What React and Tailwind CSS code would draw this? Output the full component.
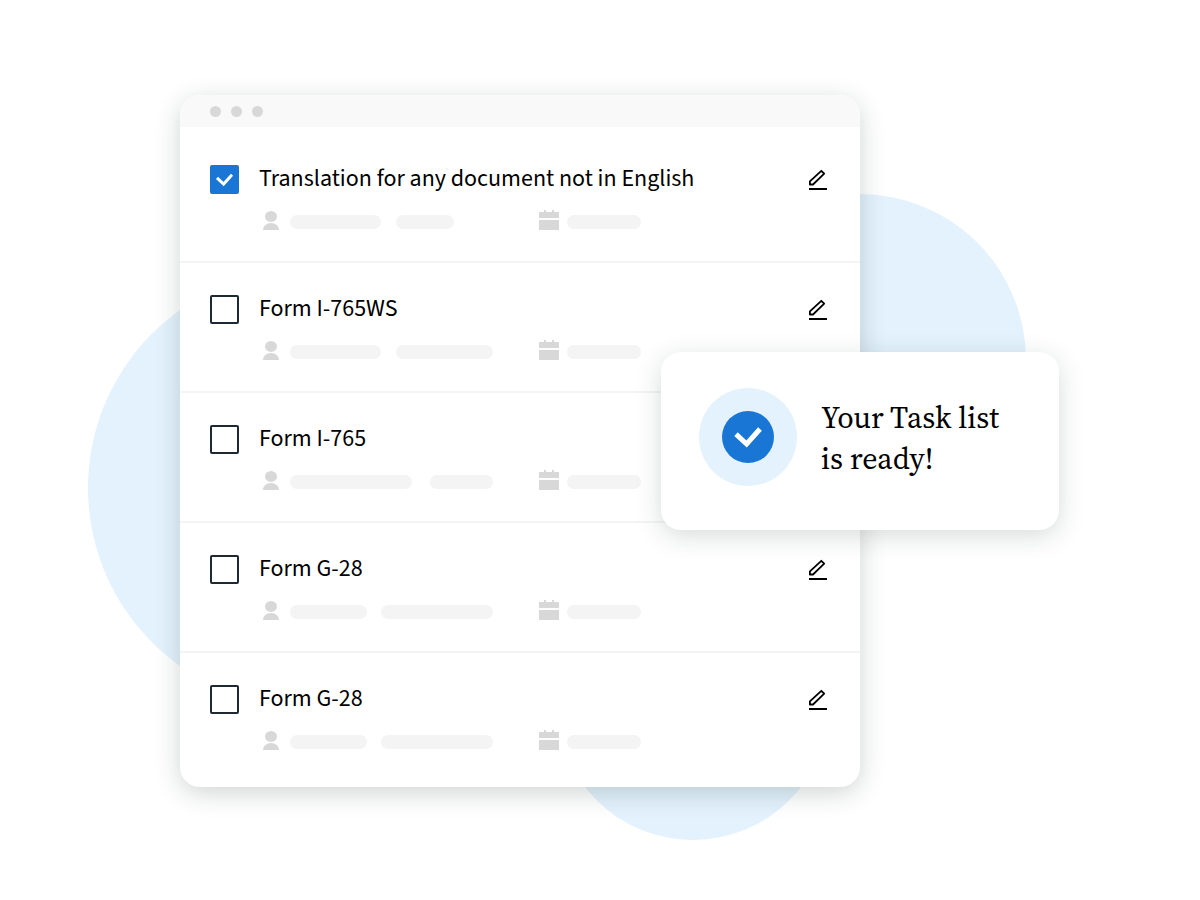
import { useState } from "react";

const initialTasks = [
  { id: 1, title: "Translation for any document not in English", done: true, bars: ["w-[91px]", "ml-[15px] w-[58px]"] },
  { id: 2, title: "Form I-765WS", done: false, bars: ["w-[91px]", "ml-[15px] w-[97px]"] },
  { id: 3, title: "Form I-765", done: false, bars: ["w-[122px]", "ml-[18px] w-[63px]"] },
  { id: 4, title: "Form G-28", done: false, bars: ["w-[77px]", "ml-[14px] w-[112px]"] },
  { id: 5, title: "Form G-28", done: false, bars: ["w-[77px]", "ml-[14px] w-[112px]"] },
];

function PersonIcon() {
  return (
    <svg className="h-5 w-4 shrink-0 fill-[#d8d8d8]" viewBox="0 0 16 20" aria-hidden="true">
      <ellipse cx="8" cy="6.4" rx="6" ry="5.5" />
      <path d="M0 20c0-4 3.5-7 8-7s8 3 8 7z" />
    </svg>
  );
}

function CalendarIcon() {
  return (
    <svg className="h-5 w-5 shrink-0 fill-[#d8d8d8]" viewBox="0 0 20 20" aria-hidden="true">
      <path d="M5 0h2v2h6V0h2v2h5v6H0V2h5zM0 10h20v10H0z" />
    </svg>
  );
}

function PencilIcon() {
  return (
    <svg className="h-[23px] w-5" viewBox="0 0 20 23" fill="none" stroke="#000" aria-hidden="true">
      <path d="M1.9 16.5v-3.1L13.3 2.8l2.9 2.8L5 16.5z" strokeWidth="1.8" strokeLinejoin="round" />
      <path d="M1 21h18" strokeWidth="2" />
    </svg>
  );
}

function Placeholder({ className }) {
  return <span className={`h-3.5 rounded-full bg-[#f4f4f4] ${className}`} />;
}

function TaskRow({ task, onToggle }) {
  const inputId = `task-${task.id}`;

  return (
    <li className="border-b-2 border-[#f4f4f4] px-[30px] pt-8 pb-[31px] last:border-b-0 last:pb-[37px]">
      <div className="flex h-[29px] items-center">
        <span className="relative flex shrink-0">
          <input
            id={inputId}
            type="checkbox"
            checked={task.done}
            onChange={() => onToggle(task.id)}
            className="size-[29px] appearance-none rounded-[2px] border-2 border-[#1f2933] bg-white checked:border-[#1976d4] checked:bg-[#1976d4]"
          />
          {task.done && (
            <svg className="pointer-events-none absolute inset-0 size-[29px]" viewBox="0 0 29 29" fill="none" aria-hidden="true">
              <path d="M7 12.8l6.6 6.2 8.4-9.2" stroke="#fff" strokeWidth="3" />
            </svg>
          )}
        </span>
        <label htmlFor={inputId} className="ml-5 flex-1 pb-0.5 text-2xl leading-7">
          {task.title}
        </label>
        <button type="button" aria-label={`Edit ${task.title}`} className="mr-0.5 shrink-0">
          <PencilIcon />
        </button>
      </div>

      <div className="mt-4 ml-[53px] flex h-5 items-center">
        <div className="flex w-[276px] items-center">
          <PersonIcon />
          <div className="ml-[11px] flex pt-1">
            {task.bars.map((bar) => (
              <Placeholder key={bar} className={bar} />
            ))}
          </div>
        </div>
        <CalendarIcon />
        <div className="ml-2 flex pt-1">
          <Placeholder className="w-[74px]" />
        </div>
      </div>
    </li>
  );
}

function ReadyCard() {
  return (
    <div className="absolute top-[257px] -right-[199px] flex items-center gap-6 rounded-[20px] bg-white pt-9 pr-[60px] pb-11 pl-[38px] shadow-[0_6px_26px_rgba(25,45,40,0.17)]">
      <span className="flex size-[98px] shrink-0 items-center justify-center rounded-full bg-[#e3f2fd]">
        <span className="flex size-[52px] items-center justify-center rounded-full bg-[#1976d4]">
          <svg className="size-[52px]" viewBox="0 0 52 52" fill="none" aria-hidden="true">
            <path d="M14 23.2l10.6 9.8L38 18" stroke="#fff" strokeWidth="5" />
          </svg>
        </span>
      </span>
      <p className="pt-0.5 font-['Source_Serif_4','Source_Serif_Pro','Noto_Serif','Liberation_Serif',serif] text-[30px] leading-[41px] whitespace-nowrap">
        Your Task list
        <br />
        is ready!
      </p>
    </div>
  );
}

export default function App() {
  const [tasks, setTasks] = useState(initialTasks);

  const toggleTask = (id) =>
    setTasks((prev) => prev.map((task) => (task.id === id ? { ...task, done: !task.done } : task)));

  return (
    <main className="min-h-screen overflow-hidden bg-white pt-[95px] pr-[340px] pb-28 pl-[180px] font-['Source_Sans_3','Source_Sans_Pro','Noto_Sans_CJK_JP',sans-serif] text-black">
      <div className="relative isolate">
        <span className="absolute top-[175px] -left-[92px] -z-10 size-[436px] rounded-full bg-[#e3f2fd]" />
        <span className="absolute top-[99px] -right-[166px] -z-10 size-[332px] rounded-full bg-[#e3f2fd]" />
        <span className="absolute right-[30px] -bottom-[53px] -z-10 size-[274px] rounded-full bg-[#e3f2fd]" />

        <section className="overflow-hidden rounded-[20px] bg-white shadow-[0_6px_26px_rgba(25,45,40,0.2)]">
          <header className="flex h-8 items-center gap-2.5 bg-[#f9f9f9] px-[30px]">
            <span className="size-[11px] rounded-full bg-[#d8d8d8]" />
            <span className="size-[11px] rounded-full bg-[#d8d8d8]" />
            <span className="size-[11px] rounded-full bg-[#d8d8d8]" />
          </header>
          <ul className="pt-1.5">
            {tasks.map((task) => (
              <TaskRow key={task.id} task={task} onToggle={toggleTask} />
            ))}
          </ul>
        </section>

        <ReadyCard />
      </div>
    </main>
  );
}
